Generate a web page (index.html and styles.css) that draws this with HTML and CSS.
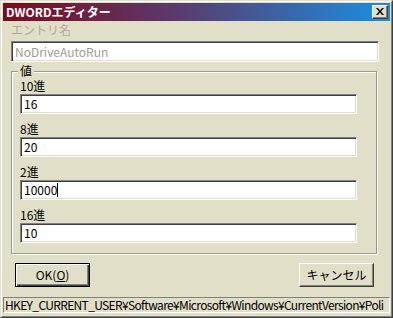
FILE: index.html
```html
<!DOCTYPE html>
<html lang="ja">
<head>
<meta charset="utf-8">
<link rel="stylesheet" href="styles.css">
</head>
<body>
<div class="window">
  <div class="frame">
    <div class="titlebar">
      <span class="title">DWORDエディター</span>
      <span class="close">
        <svg width="8" height="7" viewBox="0 0 8 7"><path d="M0 0h2l2 2.5L6 0h2L5 3.5 8 7H6L4 4.5 2 7H0l3-3.5z" fill="#000"/></svg>
      </span>
    </div>
    <div class="content">
      <div class="label disabled">エントリ名</div>
      <div class="field field-top disabled-field">NoDriveAutoRun</div>
      <div class="group">
        <div class="group-title">値</div>
        <div class="row">
          <div class="label">10進</div>
          <div class="field">16</div>
        </div>
        <div class="row">
          <div class="label">8進</div>
          <div class="field">20</div>
        </div>
        <div class="row">
          <div class="label">2進</div>
          <div class="field">10000<span class="caret"></span></div>
        </div>
        <div class="row">
          <div class="label">16進</div>
          <div class="field">10</div>
        </div>
      </div>
      <div class="buttons">
        <div class="btn default"><span class="btn-inner">OK(<u>O</u>)</span></div>
        <div class="btn"><span class="btn-inner">キャンセル</span></div>
      </div>
    </div>
    <div class="status">HKEY_CURRENT_USER¥Software¥Microsoft¥Windows¥CurrentVersion¥Poli</div>
  </div>
</div>
</body>
</html>
```
FILE: styles.css
```css
html, body {
  margin: 0;
  padding: 0;
  background: #e2dfc8;
}
body {
  font-family: "Noto Sans CJK JP", "Liberation Sans", sans-serif;
  font-size: 12px;
  line-height: 14px;
  color: #000;
}
.window {
  width: 393px;
  height: 318px;
  box-sizing: border-box;
  background: #e2dfc8;
  border: 1px solid;
  border-color: #e2dfc8 #404040 #404040 #e2dfc8;
}
.frame {
  height: 100%;
  box-sizing: border-box;
  border: 1px solid;
  border-color: #fff #808080 #808080 #fff;
  padding: 1px;
  display: flex;
  flex-direction: column;
}
.titlebar {
  height: 18px;
  flex: none;
  display: flex;
  align-items: center;
  justify-content: space-between;
  background: linear-gradient(90deg, #7e0a1c 0%, #5a3a6c 45%, #1b8fe2 100%);
  padding: 0 2px 0 3px;
}
.title {
  color: #fff;
  font-weight: bold;
  font-size: 12px;
  line-height: 18px;
  white-space: nowrap;
}
.close {
  width: 16px;
  height: 14px;
  box-sizing: border-box;
  background: #e2dfc8;
  border: 1px solid;
  border-color: #fff #404040 #404040 #fff;
  box-shadow: inset -1px -1px 0 #808080;
  display: flex;
  align-items: center;
  justify-content: center;
  padding-bottom: 1px;
}
.content {
  flex: none;
  padding: 2px 11px 0 8px;
}
.label {
  line-height: 14px;
  height: 14px;
  white-space: nowrap;
}
.disabled {
  color: #aeab98;
}
.field {
  height: 20px;
  box-sizing: border-box;
  background: #fff;
  border: 1px solid;
  border-color: #808080 #fff #fff #808080;
  box-shadow: inset 1px 1px 0 #404040, inset -1px -1px 0 #e2dfc8;
  padding: 0 3px;
  line-height: 14px;
  white-space: nowrap;
  display: flex;
  align-items: center;
}
.field-top {
  margin-top: 4px;
  height: 21px;
}
.disabled-field {
  color: #a09e90;
}
.caret {
  display: inline-block;
  width: 1px;
  height: 14px;
  background: #000;
}
.group {
  margin: 9px 2px 0 0;
  border: 1px solid #9d9a86;
  box-shadow: 1px 1px 0 #fff, inset 1px 1px 0 #fff;
  padding: 0 19px 10px 8px;
}
.group-title {
  display: block;
  width: fit-content;
  margin: -8px 0 1px -2px;
  padding: 0 2px;
  background: #e2dfc8;
  line-height: 14px;
  height: 14px;
}
.row {
  margin-top: 1px;
  margin-bottom: 8px;
}
.row .label {
  margin-bottom: 1px;
}
.row:last-child {
  margin-bottom: 0;
}
.buttons {
  display: flex;
  justify-content: space-between;
  margin: 9px 5px 0 4px;
}
.btn {
  width: 75px;
  height: 24px;
  box-sizing: border-box;
  border: 1px solid;
  border-color: #fff #404040 #404040 #fff;
  box-shadow: inset -1px -1px 0 #808080;
  display: flex;
  align-items: center;
  justify-content: center;
}
.btn.default {
  border: 1px solid #000;
  box-shadow: inset 1px 1px 0 #fff, inset -1px -1px 0 #404040, inset -2px -2px 0 #808080;
}
.btn-inner {
  line-height: 14px;
  white-space: nowrap;
}
.btn-inner u {
  text-underline-offset: 1px;
}
.status {
  margin-top: auto;
  margin-bottom: 2px;
  height: 16px;
  flex: none;
  box-sizing: border-box;
  border: 1px solid;
  border-color: #808080 #fff #fff #808080;
  padding-left: 1px;
  line-height: 14px;
  white-space: nowrap;
  overflow: hidden;
  font-size: 12px;
  letter-spacing: -0.65px;
}
```
